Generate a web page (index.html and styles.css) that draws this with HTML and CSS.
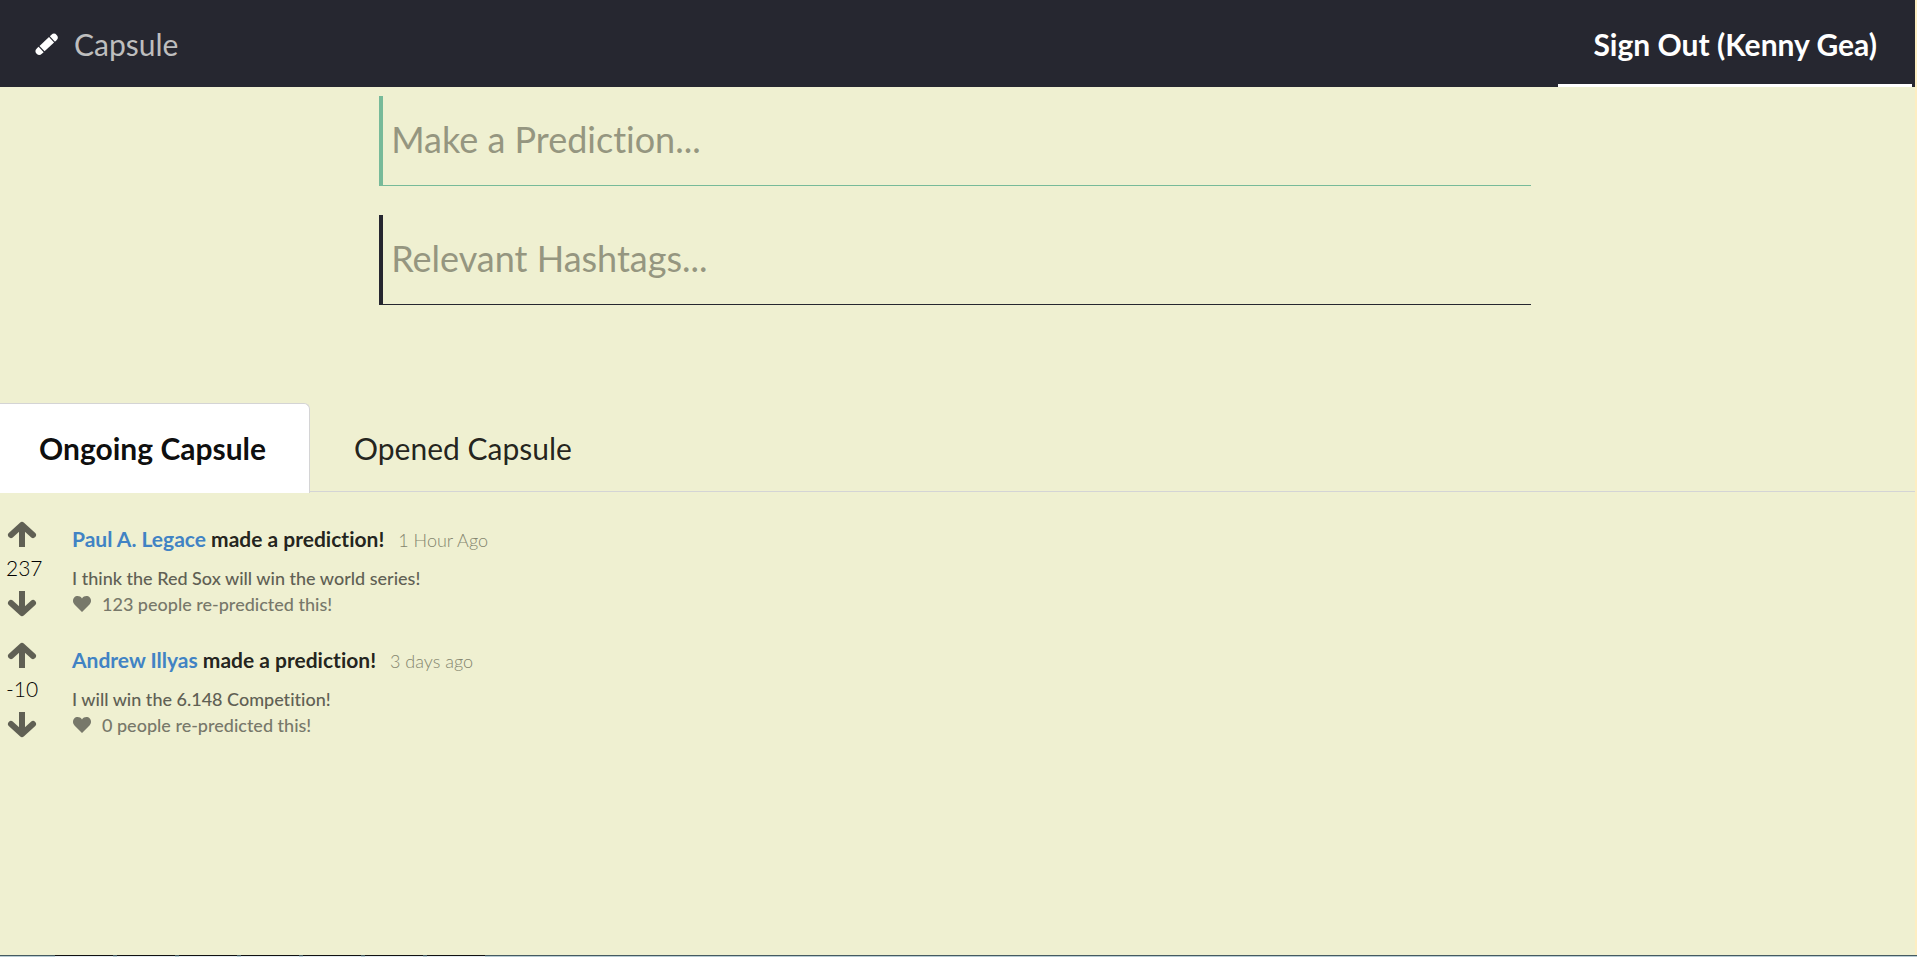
FILE: index.html
```html
<!DOCTYPE html>
<html lang="en">
<head>
<meta charset="utf-8">
<title>Capsule</title>
<link rel="stylesheet" href="styles.css">
</head>
<body>
<div class="page">
  <header class="menu">
    <a class="brand" href="#">
      <svg class="brand-icon" viewBox="0 0 20 20" aria-hidden="true"><g transform="rotate(-43 10 10)" fill="#fff"><path d="M0 6.300H-.5A3.700 3.700 0 0 0-.5 13.700H2V6.300Z"/><path d="M3.200 6.300H16.200V13.700H3.200Z"/><path d="M17.400 6.300H19.500A3.700 3.700 0 0 1 19.500 13.700H17.400Z"/></g></svg>
      <span>Capsule</span>
    </a>
    <a class="sign-out" href="#">Sign Out (Kenny Gea)</a>
  </header>
  <main>
    <form class="predict">
      <input class="field field-green" type="text" placeholder="Make a Prediction..." aria-label="Make a Prediction">
      <input class="field field-dark" type="text" placeholder="Relevant Hashtags..." aria-label="Relevant Hashtags">
    </form>
    <nav class="tabs">
      <a class="tab tab-active" href="#">Ongoing Capsule</a>
      <a class="tab" href="#">Opened Capsule</a>
    </nav>
    <section class="feed">
      <article class="event">
        <div class="votes">
          <button class="vote" type="button" aria-label="Vote up"><svg viewBox="0 0 28 26"><path d="M3 13 14 3 25 13"/><path class="stem" d="M14 5V25"/></svg></button>
          <span class="score">237</span>
          <button class="vote" type="button" aria-label="Vote down"><svg viewBox="0 0 28 26"><path d="M3 13 14 23 25 13"/><path class="stem" d="M14 1V21"/></svg></button>
        </div>
        <div class="content">
          <div class="summary"><a href="#">Paul A. Legace</a> made a prediction!<span class="date">1 Hour Ago</span></div>
          <div class="text">I think the Red Sox will win the world series!</div>
          <button class="like" type="button"><svg viewBox="0 0 18 16"><path d="M9 16 1.500 8.500C-.5 6.500-.5 3.200 1.200 1.500 3.200-.5 7-.5 9 2.500 11-.5 14.800-.5 16.800 1.500 18.500 3.200 18.500 6.500 16.500 8.500Z"/></svg>123 people re-predicted this!</button>
        </div>
      </article>
      <article class="event">
        <div class="votes">
          <button class="vote" type="button" aria-label="Vote up"><svg viewBox="0 0 28 26"><path d="M3 13 14 3 25 13"/><path class="stem" d="M14 5V25"/></svg></button>
          <span class="score">-10</span>
          <button class="vote" type="button" aria-label="Vote down"><svg viewBox="0 0 28 26"><path d="M3 13 14 23 25 13"/><path class="stem" d="M14 1V21"/></svg></button>
        </div>
        <div class="content">
          <div class="summary"><a href="#">Andrew Illyas</a> made a prediction!<span class="date">3 days ago</span></div>
          <div class="text">I will win the 6.148 Competition!</div>
          <button class="like" type="button"><svg viewBox="0 0 18 16"><path d="M9 16 1.500 8.500C-.5 6.500-.5 3.200 1.200 1.500 3.200-.5 7-.5 9 2.500 11-.5 14.800-.5 16.800 1.500 18.500 3.200 18.500 6.500 16.500 8.500Z"/></svg>0 people re-predicted this!</button>
        </div>
      </article>
    </section>
  </main>
</div>
<footer class="dock"><i></i><i></i><i></i><i></i><i></i><i></i><i></i></footer>
</body>
</html>
```

FILE: styles.css
```css
* { box-sizing: border-box; }
body {
  margin: 0;
  min-height: 100vh;
  display: flex;
  flex-direction: column;
  background: #eff0d1;
  color: rgba(0, 0, 0, .87);
  font-family: Lato, sans-serif;
  font-size: 21px;
  font-variant-ligatures: none;
}
a { color: #4183c4; text-decoration: none; }
button { padding: 0; border: 0; background: none; font: inherit; font-variant-ligatures: none; cursor: pointer; }
svg { display: block; overflow: visible; }
.page { flex: 1; border-right: 2px solid #fdeec2; }
.menu {
  height: 87px;
  display: flex;
  justify-content: space-between;
  padding-right: 3px;
  background: #262730;
  font-size: 30px;
}
.brand { display: flex; align-items: center; gap: 17px; padding-left: 37px; color: #bebebe; }
.brand-icon { width: 20px; height: 20px; }
.sign-out {
  display: flex;
  align-items: center;
  padding: 3px 35px 0;
  border-bottom: 3px solid #fff;
  color: #fff;
  font-weight: 700;
}
.predict { display: grid; gap: 29px; padding: 9px 20.05% 0 19.8%; }
.field {
  width: 100%;
  height: 90px;
  padding: 0 8px 3px;
  border: 0 solid;
  border-width: 0 0 1px 4px;
  border-radius: 0;
  outline: 0;
  background: transparent;
  font: 400 36px Lato, sans-serif;
  font-variant-ligatures: none;
}
.field::placeholder { color: #959680; opacity: 1; }
.field-green { border-color: #77ba99; }
.field-dark { border-color: #262730; }
.tabs { display: flex; margin-top: 98px; border-bottom: 1px solid #d4d4d5; font-size: 30px; }
.tab {
  height: 88px;
  display: flex;
  align-items: center;
  padding: 2px 44px 0;
  color: rgba(0, 0, 0, .87);
}
.tab-active {
  height: 90px;
  margin-bottom: -2px;
  padding: 0 43px 2px 39px;
  border: 1px solid #d4d4d5;
  border-width: 1px 1px 0 0;
  border-radius: 0 6px 0 0;
  background: #fff;
  color: rgba(0, 0, 0, .95);
  font-weight: 700;
}
.feed { display: grid; gap: 26px; padding-top: 30px; }
.event { display: flex; gap: 22px; }
.votes { width: 50px; padding-left: 6px; }
.vote { display: block; margin-left: 2px; }
.vote svg { width: 28px; height: 26px; fill: none; stroke: #606054; stroke-width: 6; stroke-linecap: round; stroke-linejoin: round; }
.vote .stem { stroke-linecap: butt; }
.score { display: block; height: 42px; line-height: 40px; color: #000; font-weight: 300; }
.content { padding-top: 3px; }
.summary { line-height: 28px; font-weight: 700; }
.date { margin-left: 14px; color: #84856f; font-size: 18px; font-weight: 300; }
.text { margin-top: 11px; line-height: 26px; font-size: 18px; font-weight: 500; color: #606054; }
.like { display: flex; align-items: center; gap: 11px; line-height: 26px; font-size: 18px; font-weight: 500; color: #77786a; }
.like svg { width: 18px; height: 16px; margin-left: 1px; fill: #77786a; }
.dock { height: 2px; display: flex; gap: 4px; padding-left: 55px; border-top: 1px solid #455a60; background: #b8ccd4; }
.dock i { width: 58px; height: 2px; margin-top: -1px; border-top: 1px solid #111; background: #e4ecf2; }
```
